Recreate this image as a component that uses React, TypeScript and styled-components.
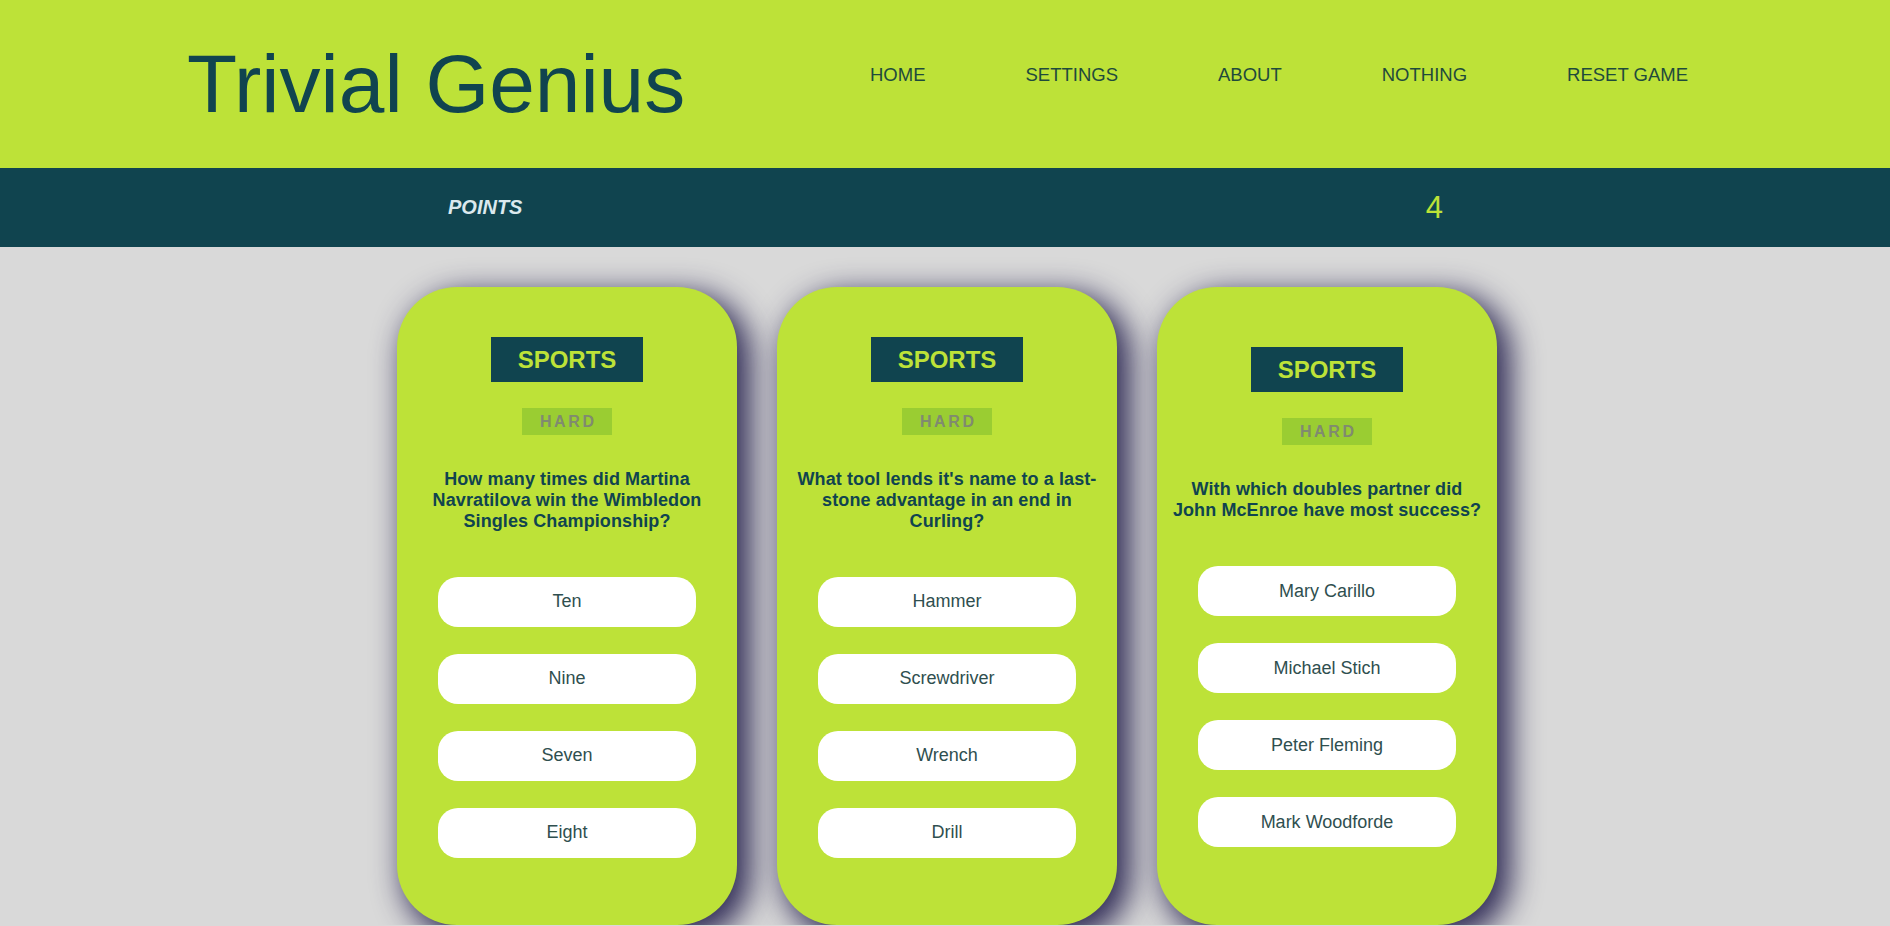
import React from "react";
import styled, { createGlobalStyle } from "styled-components";

const GREEN = "#bde238";
const TEAL = "#10444f";

const GlobalStyle = createGlobalStyle`
  html, body {
    margin: 0;
    padding: 0;
    background: #d9d9d9;
    font-family: "Liberation Sans", Arial, sans-serif;
  }
  * { box-sizing: border-box; }
`;

const Header = styled.header`
  height: 168px;
  background: ${GREEN};
  display: flex;
  align-items: center;
  padding: 0 202px 0 187px;
`;

const Title = styled.h1`
  margin: 0;
  font-family: "Liberation Sans", Arial, sans-serif;
  font-weight: 400;
  font-size: 82px;
  line-height: 1;
  color: ${TEAL};
`;

const Nav = styled.nav`
  margin-left: auto;
  margin-bottom: 19px;
  display: flex;
  gap: 100px;
`;

const NavLink = styled.a`
  font-family: "Liberation Sans", Arial, sans-serif;
  font-size: 18.5px;
  color: #1f4a3c;
  text-decoration: none;
  text-transform: uppercase;
  cursor: pointer;
`;

const PointsBar = styled.div`
  height: 79px;
  background: ${TEAL};
  display: flex;
  align-items: center;
  justify-content: space-between;
  padding: 0 447px 0 448px;
`;

const PointsLabel = styled.span`
  font-family: "Liberation Sans", Arial, sans-serif;
  font-style: italic;
  font-weight: 700;
  font-size: 20px;
  color: #dbe9ee;
`;

const PointsValue = styled.span`
  font-family: "Liberation Sans", Arial, sans-serif;
  font-size: 31px;
  font-weight: 400;
  color: ${GREEN};
`;

const Main = styled.main`
  display: flex;
  justify-content: center;
  gap: 40px;
  padding: 40px 0 0 4px;
`;

const Card = styled.section`
  width: 340px;
  height: 638px;
  background: ${GREEN};
  border-radius: 60px;
  display: flex;
  flex-direction: column;
  align-items: center;
  justify-content: center;
  padding: 0 14px 18px;
  box-shadow: 10px 10px 30px 4px rgba(40, 36, 80, 0.95);
`;

const Category = styled.div`
  background: ${TEAL};
  color: ${GREEN};
  font-family: "Liberation Sans", Arial, sans-serif;
  font-weight: 700;
  font-size: 24px;
  line-height: 27px;
  padding: 9px 27px;
  text-transform: uppercase;
`;

const Difficulty = styled.div`
  margin-top: 26px;
  background: #9acd32;
  color: #808a70;
  font-family: "Liberation Sans", Arial, sans-serif;
  font-weight: 700;
  font-size: 16px;
  letter-spacing: 2.6px;
  line-height: 27px;
  padding: 0 15px 0 17.5px;
  text-transform: uppercase;
`;

const Question = styled.p`
  margin: 34px 0 0;
  font-family: "Liberation Sans", Arial, sans-serif;
  font-weight: 700;
  font-size: 18px;
  letter-spacing: 0.1px;
  line-height: 21px;
  color: ${TEAL};
  text-align: center;
`;

const Answers = styled.div`
  margin-top: 45px;
  display: flex;
  flex-direction: column;
  gap: 27px;
`;

const Answer = styled.button`
  width: 258px;
  height: 50px;
  border: none;
  border-radius: 20px;
  background: #ffffff;
  color: #2f4f4f;
  font-family: "Liberation Sans", Arial, sans-serif;
  font-size: 18px;
  cursor: pointer;
  padding: 0;
`;

type Q = { question: string; answers: string[] };

const questions: Q[] = [
  {
    question:
      "How many times did Martina Navratilova win the Wimbledon Singles Championship?",
    answers: ["Ten", "Nine", "Seven", "Eight"],
  },
  {
    question:
      "What tool lends it's name to a last-stone advantage in an end in Curling?",
    answers: ["Hammer", "Screwdriver", "Wrench", "Drill"],
  },
  {
    question: "With which doubles partner did John McEnroe have most success?",
    answers: ["Mary Carillo", "Michael Stich", "Peter Fleming", "Mark Woodforde"],
  },
];

export default function App() {
  return (
    <>
      <GlobalStyle />
      <Header>
        <Title>Trivial Genius</Title>
        <Nav>
          <NavLink>Home</NavLink>
          <NavLink>Settings</NavLink>
          <NavLink>About</NavLink>
          <NavLink>Nothing</NavLink>
          <NavLink>Reset Game</NavLink>
        </Nav>
      </Header>
      <PointsBar>
        <PointsLabel>POINTS</PointsLabel>
        <PointsValue>4</PointsValue>
      </PointsBar>
      <Main>
        {questions.map((q, i) => (
          <Card key={i}>
            <Category>Sports</Category>
            <Difficulty>Hard</Difficulty>
            <Question>{q.question}</Question>
            <Answers>
              {q.answers.map((a) => (
                <Answer key={a}>{a}</Answer>
              ))}
            </Answers>
          </Card>
        ))}
      </Main>
    </>
  );
}
